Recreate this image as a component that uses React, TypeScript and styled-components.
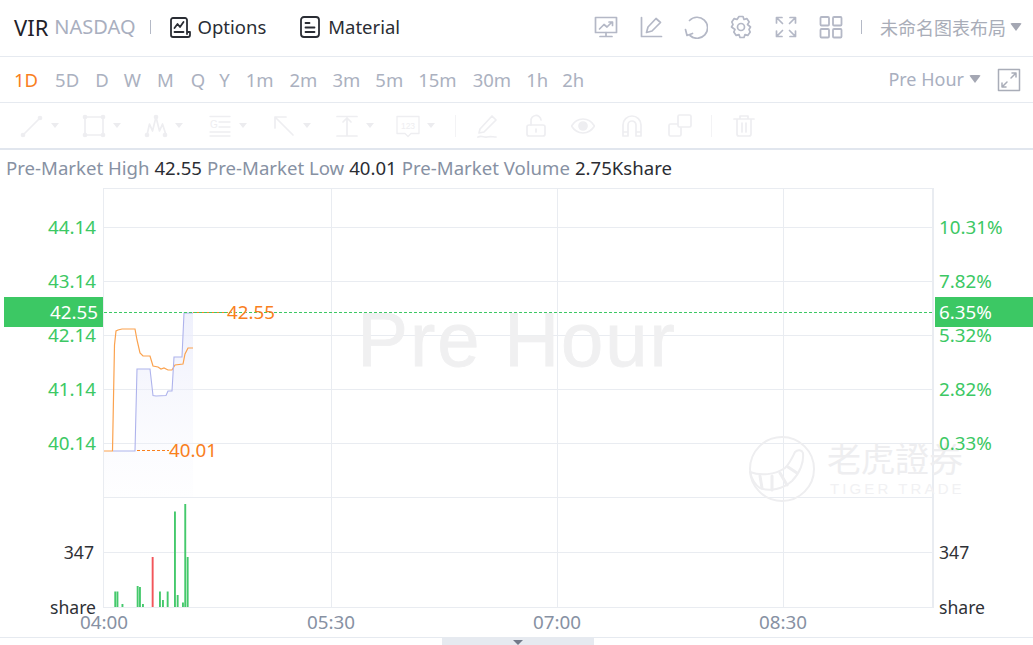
import React from 'react'
import styled, { createGlobalStyle } from 'styled-components'

const GlobalStyle = createGlobalStyle`
  html, body {
    margin: 0;
    padding: 0;
    background: #fff;
  }
  body {
    font-family: "Noto Sans", "Noto Sans CJK SC", sans-serif;
  }
`

const Page = styled.div`
  width: 1033px;
  height: 645px;
  overflow: hidden;
  display: flex;
  flex-direction: column;
  background: #fff;
`

const Header = styled.header`
  height: 56px;
  flex: none;
  box-sizing: border-box;
  display: flex;
  align-items: center;
  padding: 0 11px 3px 14px;
`

const Rule = styled.div`
  height: 1px;
  flex: none;
  background: #e6eaf0;
`

const Symbol = styled.span`
  font-size: 22px;
  color: #1f2229;
`

const Exchange = styled.span`
  font-size: 20px;
  color: #a9afbf;
  margin-left: 6px;
`

const Divider = styled.i<{ $gap: number; $before: number }>`
  width: 1px;
  height: 14px;
  background: #b4b9c6;
  margin: 0 ${(p) => p.$gap}px 0 ${(p) => p.$before}px;
`

const NavLink = styled.a`
  display: flex;
  align-items: center;
  gap: 6px;
  font-size: 18.5px;
  color: #2a2d34;
  margin-right: 32px;
`

const Spacer = styled.div`
  flex: 1;
`

const ToolIcons = styled.div`
  display: flex;
  align-items: center;
  gap: 21px;
  color: #b4b8c6;
`

const LayoutName = styled.span`
  font-size: 18px;
  color: #a9adb8;
  display: flex;
  align-items: center;
  gap: 4px;
`

const Caret = styled.i`
  display: inline-block;
  width: 0;
  height: 0;
  border-left: 6px solid transparent;
  border-right: 6px solid transparent;
  border-top: 8px solid #a4a7b3;
  border-radius: 2px;
`

const PeriodRow = styled.nav`
  height: 45px;
  flex: none;
  display: flex;
  align-items: center;
  padding: 0 12px 0 14px;
`

const Period = styled.span<{ $active?: boolean; $gap: number }>`
  font-size: 18.5px;
  color: ${(p) => (p.$active ? '#f9801d' : '#abb1c0')};
  margin-right: ${(p) => p.$gap}px;
`

const SessionPick = styled.span`
  font-size: 18px;
  color: #a9afbf;
  display: flex;
  align-items: center;
  gap: 5px;
  margin-right: 16px;
  padding-bottom: 2px;
`

const ExpandButton = styled.span`
  display: flex;
  color: #a9adb8;
`

const DrawBar = styled.div`
  height: 45px;
  flex: none;
  display: flex;
  align-items: center;
  padding-left: 20px;
  color: #eeeef1;
`

const ThickRule = styled.div`
  height: 2px;
  flex: none;
  background: #e1e6ee;
`

const DrawTool = styled.span<{ $gap: number }>`
  display: flex;
  align-items: center;
  gap: 7px;
  margin-right: ${(p) => p.$gap}px;
`

const MiniCaret = styled.i`
  width: 0;
  height: 0;
  border-left: 4px solid transparent;
  border-right: 4px solid transparent;
  border-top: 5px solid #ececef;
`

const DrawDivider = styled.i<{ $gap: number }>`
  width: 1px;
  height: 22px;
  background: #f3f3f5;
  margin-right: ${(p) => p.$gap}px;
`

const InfoRow = styled.div`
  height: 38px;
  flex: none;
  display: flex;
  align-items: center;
  gap: 5px;
  padding: 0 0 3px 6px;
  font-size: 18.6px;
  box-sizing: border-box;
`

const InfoLabel = styled.span`
  color: #8791a3;
`

const InfoValue = styled.span`
  color: #2b2d33;
`

const ChartSvg = styled.svg`
  display: block;
  flex: none;
  font-family: "Noto Sans", "Noto Sans CJK SC", sans-serif;
`

const Handle = styled.div`
  flex: 1;
  width: 152px;
  margin-left: 442px;
  background: #e6eaf0;
  display: flex;
  justify-content: center;
  align-items: flex-end;
`

const HandleArrow = styled.i`
  width: 0;
  height: 0;
  border-left: 5px solid transparent;
  border-right: 5px solid transparent;
  border-top: 5px solid #737a8a;
`

type IconProps = { children: React.ReactNode; size?: number; sw?: number }

const Ico = ({ children, size = 24, sw = 1.7 }: IconProps) => (
  <svg width={size} height={size} viewBox="0 0 24 24" fill="none" stroke="currentColor" strokeWidth={sw} strokeLinecap="round" strokeLinejoin="round">
    {children}
  </svg>
)

const periods: [string, number, boolean?][] = [
  ['1D', 17, true], ['5D', 16], ['D', 15], ['W', 16], ['M', 17], ['Q', 14], ['Y', 16],
  ['1m', 16], ['2m', 15], ['3m', 15], ['5m', 15], ['15m', 16], ['30m', 15], ['1h', 14], ['2h', 0],
]

const gridYs = [227, 281, 335, 389, 443, 497, 552]
const gridXs = [331, 557, 783]

const leftPrices: [number, string][] = [[234, '44.14'], [288, '43.14'], [342, '42.14'], [396, '41.14'], [450, '40.14']]
const rightPcts: [number, string][] = [[234, '10.31%'], [288, '7.82%'], [342, '5.32%'], [396, '2.82%'], [450, '0.33%']]

const bluePoints = '113,451 135,451 137,369 150,369 153,395.5 156,396 166,395.5 168,391 172,391 174,357 182,357 184,313 193,313'
const orangePoints = '104,451 112.5,451 114.5,345 116,331 118,330 122,329 135,329 137,340 140,353 143,356 150,356 153,366 158,367 161,369 164,368 168,370 172,370 175,365 183,364 185,354 188,348 193,348'

const volumes: [number, number, boolean?][] = [
  [114.3, 591.5], [116.5, 591.5], [121.5, 604], [136.7, 586], [139, 587], [142, 604],
  [151.7, 557, true], [159, 591.5], [162, 600], [166.7, 591.5], [174, 511.5], [176.7, 595],
  [182, 602.5], [184.3, 504], [186.7, 557],
]

const Chart = () => (
  <ChartSvg width={1033} height={449} viewBox="0 188 1033 449">
    <defs>
      <linearGradient id="areaFill" x1="0" y1="0" x2="0" y2="1">
        <stop offset="0%" stopColor="#e9ebfb" stopOpacity="0.75" />
        <stop offset="100%" stopColor="#f4f5fd" stopOpacity="0.1" />
      </linearGradient>
    </defs>

    <g stroke="#e9ecf1" strokeWidth="1" shapeRendering="crispEdges">
      <rect x="103.5" y="188.5" width="830" height="419" fill="none" />
      <line x1="932.5" x2="932.5" y1="189" y2="607" />
      {gridYs.map((y) => <line key={y} x1="104" x2="933" y1={y + 0.5} y2={y + 0.5} />)}
      {gridXs.map((x) => <line key={x} x1={x + 0.5} x2={x + 0.5} y1="189" y2="607" />)}
    </g>

    <text x="517" y="366" textAnchor="middle" fontSize="76" fill="#f0f0f1" stroke="#f0f0f1" strokeWidth="0.8" fontFamily='"Liberation Sans", sans-serif' letterSpacing="1.9">Pre Hour</text>

    <g fill="none" stroke="#eeeef0" strokeWidth="2" strokeLinecap="round" strokeLinejoin="round">
      <circle cx="782" cy="469" r="32" />
      <path d="M750 472C760 476 775 475 785 468C790 463 792 458 795 452C798 449 802 450 803 453C804 462 800 473 792 481C783 489 770 492 760 488C755 485 752 480 750 472Z" />
      <path strokeWidth="3" d="M760 476l2 12M772 476v14M780 473l7 12M788 467l9 6" />
    </g>
    <text x="827" y="472" fontSize="34" fill="#eeeef0" fontFamily='"Noto Sans CJK TC", sans-serif'>老虎證券</text>
    <text x="830" y="494" fontSize="15" fill="#f1f1f3" letterSpacing="3.1" fontFamily='"Liberation Sans", sans-serif'>TIGER TRADE</text>

    <polygon points={`104,497 104,451 ${bluePoints} 193,497`} fill="url(#areaFill)" />
    <polyline points={orangePoints} fill="none" stroke="#fba24e" strokeWidth="1.2" />
    <polyline points={bluePoints} fill="none" stroke="#aeb3ec" strokeWidth="1.1" />

    <line x1="137" x2="169" y1="450.5" y2="450.5" stroke="#f9801d" strokeDasharray="3 2" shapeRendering="crispEdges" />
    <line x1="193" x2="228" y1="312.5" y2="312.5" stroke="#f9801d" shapeRendering="crispEdges" />
    <line x1="104" x2="934" y1="312.5" y2="312.5" stroke="#3cc864" strokeDasharray="3 2" shapeRendering="crispEdges" />
    <text x="227" y="319" fontSize="18.8" fill="#f9801d">42.55</text>
    <text x="169" y="457" fontSize="18.8" fill="#f9801d">40.01</text>

    {volumes.map(([x, y, down]) => (
      <rect key={x} x={x} y={y} width="1.9" height={607 - y} fill={down ? '#f2555a' : '#45c96c'} />
    ))}

    <g fontSize="18.8" fill="#3cc864">
      {leftPrices.map(([y, t]) => <text key={t} x="96" y={y} textAnchor="end">{t}</text>)}
      {rightPcts.map(([y, t]) => <text key={t} x="939" y={y}>{t}</text>)}
    </g>

    <rect x="4" y="297" width="99" height="30" fill="#3cc864" />
    <rect x="935" y="297" width="98" height="30" fill="#3cc864" />
    <text x="98" y="319" fontSize="18.8" fill="#fff" textAnchor="end">42.55</text>
    <text x="939" y="319" fontSize="18.8" fill="#fff">6.35%</text>

    <g fontSize="17.6" fill="#2f3136">
      <text x="94" y="559" textAnchor="end">347</text>
      <text x="96" y="614" textAnchor="end">share</text>
      <text x="939" y="559">347</text>
      <text x="939" y="614">share</text>
    </g>

    <g fontSize="18.8" fill="#8791a3" textAnchor="middle">
      <text x="104" y="629">04:00</text>
      <text x="331" y="629">05:30</text>
      <text x="557" y="629">07:00</text>
      <text x="783" y="629">08:30</text>
    </g>
  </ChartSvg>
)

export default function App() {
  return (
    <Page>
      <GlobalStyle />
      <Header>
        <Symbol>VIR</Symbol>
        <Exchange>NASDAQ</Exchange>
        <Divider $before={14} $gap={17} />
        <NavLink>
          <Ico sw={1.8}>
            <path d="M19 19V5a2 2 0 0 0-2-2H5a2 2 0 0 0-2 2v15a2 2 0 0 0 2 2h15a2 2 0 0 0 2-2v-3h-3" />
            <path d="M6.500 13l3-4 2.500 3 3.500-5" />
            <path d="M6.500 17h9" />
          </Ico>
          Options
        </NavLink>
        <NavLink>
          <Ico sw={1.8}>
            <rect x="3" y="2" width="18" height="20" rx="3" />
            <path d="M7.500 8h4M7.500 12.500h9M7.500 17h9" />
          </Ico>
          Material
        </NavLink>
        <Spacer />
        <ToolIcons>
          <Ico>
            <rect x="1.500" y="2.500" width="21" height="15" />
            <path d="M5.500 14l4.500-4.500 3 2.500 5-5M15 7h3.500v3.500M12 17.500V21M6 21.500h12" />
          </Ico>
          <Ico>
            <path d="M2.500 2.500v19h20" />
            <path d="M7.500 17.500l1.500-5.500 8-8.500 4.500 4-8.500 8.500z" />
          </Ico>
          <Ico>
            <path d="M5.500 5.500A10.500 10.500 0 1 1 6 20.500" />
            <path d="M1.500 14.500l1.500 6 5.500-2" />
          </Ico>
          <Ico>
            <path d="M10 1.500h4l1 3 2.800-.9 2.400 3.300-1.700 2.600L21.500 12l-1.500 2.500 1.200 2.600-2.400 3.300-2.800-.9-1 3h-4l-1-3-2.800.9-2.400-3.300 1.200-2.600L2.500 12l1.500-2.500-1.200-2.600 2.400-3.300 2.800.9z" />
            <circle cx="12" cy="12" r="3.500" />
          </Ico>
          <Ico>
            <path d="M2.500 8V2.500H8M16 2.500h5.500V8M21.500 16v5.500H16M8 21.500H2.500V16M3 3l5.500 5.500M21 3l-5.500 5.500M21 21l-5.500-5.500M3 21l5.500-5.500" />
          </Ico>
          <Ico sw={1.8}>
            <rect x="1.500" y="2" width="8.500" height="8.500" rx="1" />
            <rect x="14" y="2" width="8.500" height="8.500" rx="1" />
            <rect x="1.500" y="14" width="8.500" height="8.500" rx="1" />
            <rect x="14" y="14" width="8.500" height="8.500" rx="1" />
          </Ico>
        </ToolIcons>
        <Divider $before={18} $gap={18} />
        <LayoutName>
          未命名图表布局
          <Caret />
        </LayoutName>
      </Header>
      <Rule />

      <PeriodRow>
        {periods.map(([label, gap, active]) => (
          <Period key={label} $gap={gap} $active={active}>{label}</Period>
        ))}
        <Spacer />
        <SessionPick>
          Pre Hour
          <Caret />
        </SessionPick>
        <ExpandButton>
          <Ico size={24} sw={1.5}>
            <rect x="1.500" y="1.500" width="21" height="21" />
            <path d="M14 10l5-5M15 5h4v4M10 14l-5 5M5 15v4h4" />
          </Ico>
        </ExpandButton>
      </PeriodRow>
      <Rule />

      <DrawBar>
        <DrawTool $gap={23}>
          <Ico><path d="M3 21L20 4" /><circle cx="3" cy="21" r="1.500" fill="currentColor" /><circle cx="20" cy="4" r="1.500" fill="currentColor" /></Ico>
          <MiniCaret />
        </DrawTool>
        <DrawTool $gap={23}>
          <Ico><rect x="3" y="3" width="18" height="18" /><circle cx="3" cy="3" r="1.500" fill="currentColor" /><circle cx="21" cy="3" r="1.500" fill="currentColor" /><circle cx="3" cy="21" r="1.500" fill="currentColor" /><circle cx="21" cy="21" r="1.500" fill="currentColor" /></Ico>
          <MiniCaret />
        </DrawTool>
        <DrawTool $gap={25}>
          <Ico><path d="M3 21l2.500-11 3 7 3.500-14 3.500 14 3-7L22 21" /><circle cx="3" cy="21" r="1.500" fill="currentColor" /><circle cx="12" cy="3" r="1.500" fill="currentColor" /><circle cx="21" cy="21" r="1.500" fill="currentColor" /></Ico>
          <MiniCaret />
        </DrawTool>
        <DrawTool $gap={25}>
          <Ico sw={1.300}>
            <path d="M2 2.500h20M11 8h11M11 13h11M2 18h20M2 22h20" />
            <text x="2" y="14" fontSize="10" fill="currentColor" stroke="none" fontFamily='"Liberation Sans", sans-serif'>G</text>
          </Ico>
          <MiniCaret />
        </DrawTool>
        <DrawTool $gap={24}>
          <Ico><path d="M3 3v11M3 3h11M3 3l18 18" /></Ico>
          <MiniCaret />
        </DrawTool>
        <DrawTool $gap={22}>
          <Ico><path d="M2 2.500h20M2 22h20M12 5v17M8 8l4-4 4 4" /></Ico>
          <MiniCaret />
        </DrawTool>
        <DrawTool $gap={20}>
          <Ico sw={1.300}>
            <path d="M1 2.500h22v17h-8l-3 3-3-3H1z" />
            <text x="12" y="15" textAnchor="middle" fontSize="8.500" fill="currentColor" stroke="none" fontFamily='"Liberation Sans", sans-serif'>123</text>
          </Ico>
          <MiniCaret />
        </DrawTool>
        <DrawDivider $gap={19} />
        <DrawTool $gap={25}>
          <Ico><path d="M5 15L17 2l4 4L9 18l-5 1zM3 23c4-2 6 1 9 0s6 0 9 0" /></Ico>
        </DrawTool>
        <DrawTool $gap={23}>
          <Ico><rect x="3" y="11" width="18" height="11" rx="2" /><path d="M7 11V7a5 5 0 0 1 10-1M12 15v3" /></Ico>
        </DrawTool>
        <DrawTool $gap={25}>
          <Ico><path d="M0.500 12c3-5 7-7 11.500-7s8.500 2 11.500 7c-3 5-7 7-11.500 7S3.500 17 0.500 12z" /><circle cx="12" cy="12" r="4" fill="currentColor" /></Ico>
        </DrawTool>
        <DrawTool $gap={24}>
          <Ico><path d="M3 22V11a9 9 0 0 1 18 0v11h-5V11a4 4 0 0 0-8 0v11zM3 18h5M16 18h5" /></Ico>
        </DrawTool>
        <DrawTool $gap={19}>
          <Ico><rect x="1" y="10" width="12" height="12" rx="1.500" /><rect x="10" y="1" width="13" height="12" rx="1.500" fill="#fff" /></Ico>
        </DrawTool>
        <DrawDivider $gap={20} />
        <DrawTool $gap={0}>
          <Ico><path d="M2 5h20M8 5V2h8v3M5 5v15a2 2 0 0 0 2 2h10a2 2 0 0 0 2-2V5M10 9v9M14 9v9" /></Ico>
        </DrawTool>
      </DrawBar>
      <ThickRule />

      <InfoRow>
        <InfoLabel>Pre-Market High</InfoLabel>
        <InfoValue>42.55</InfoValue>
        <InfoLabel>Pre-Market Low</InfoLabel>
        <InfoValue>40.01</InfoValue>
        <InfoLabel>Pre-Market Volume</InfoLabel>
        <InfoValue>2.75Kshare</InfoValue>
      </InfoRow>

      <Chart />
      <Rule />
      <Handle>
        <HandleArrow />
      </Handle>
    </Page>
  )
}
